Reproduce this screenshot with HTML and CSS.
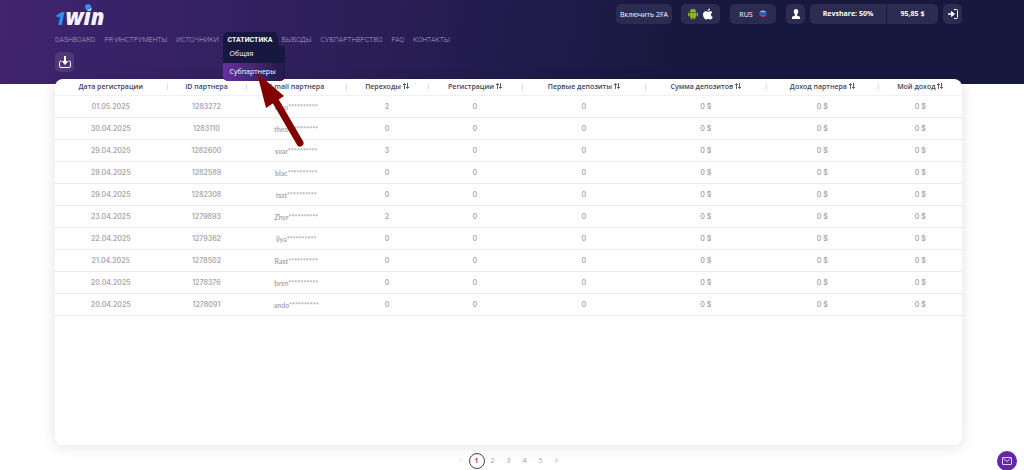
FILE: index.html
```html
<!DOCTYPE html>
<html lang="ru">
<head>
    <meta charset="UTF-8">
    <meta name="viewport" content="width=device-width, initial-scale=1.0">
    <title>1win</title>
    <link rel="stylesheet" href="styles.css">
</head>
<body>
    <header class="header">
        <div class="topbar">
            <a class="logo" href="#"><span class="logo-one">1</span><span class="logo-win">win</span></a>
            <div class="tools">
                <button class="tool tool-2fa">Включить 2FA</button>
                <div class="tool tool-apps">
                    <a href="#" aria-label="Android">
                        <svg width="10" height="12" viewBox="0 0 20 24" fill="#86b817">
                            <path d="M4 8a6 6 0 0 1 12 0z"/>
                            <path d="M6 1l2 3M14 1l-2 3" stroke="#86b817" stroke-width="1"/>
                            <path d="M4 9h12v9a1.500 1.500 0 0 1-1.500 1.500h-9A1.500 1.500 0 0 1 4 18z"/>
                            <rect x="0" y="9" width="3" height="8" rx="1.500"/>
                            <rect x="17" y="9" width="3" height="8" rx="1.500"/>
                            <rect x="6" y="17" width="3" height="6" rx="1.500"/>
                            <rect x="11" y="17" width="3" height="6" rx="1.500"/>
                        </svg>
                    </a>
                    <a href="#" aria-label="iOS">
                        <svg width="10" height="12" viewBox="0 0 20 24" fill="#fff">
                            <path d="M14 1c.2 3-2 5-4.500 5C9.300 3.500 11.500 1.300 14 1z"/>
                            <path d="M18.500 9c-4 2.500-3 7.500 1 9-1 2.500-2.700 5-4.700 5-1.700 0-2.300-1-4.300-1s-2.700 1-4.300 1C3 23 0 17 0 13c0-4 2.500-6.500 5.300-6.500 2 0 3.300 1.200 5 1.200 1.500 0 2.800-1.200 5-1.200 1.300 0 2.500.7 3.200 2.500z"/>
                        </svg>
                    </a>
                </div>
                <button class="tool tool-lang">RUS
                    <svg width="8" height="8" viewBox="0 0 16 16">
                        <path d="M1 5a8 8 0 0 1 14 0z" fill="#b9b9d6"/>
                        <path d="M1 5h14a8 8 0 0 1 0 6H1a8 8 0 0 1 0-6z" fill="#2b57c4"/>
                        <path d="M1 10h14a8 8 0 0 1-14 0z" fill="#d32f4a"/>
                    </svg>
                </button>
                <button class="tool tool-icon" aria-label="Профиль">
                    <svg width="8" height="10" viewBox="0 0 16 20" fill="#fff">
                        <path d="M8 0c3 0 4.500 2 4.500 5S11 10 10 11v2l5 2c1 .5 1 2 1 5H0c0-3 0-4.500 1-5l5-2v-2C5 10 3.500 8 3.500 5S5 0 8 0z"/>
                    </svg>
                </button>
                <div class="tool tool-balance">
                    <span class="revshare">Revshare: 50%</span>
                    <span class="amount">95,85 $</span>
                </div>
                <button class="tool tool-icon" aria-label="Выход">
                    <svg width="10" height="10" viewBox="0 0 20 20" fill="none" stroke="#fff" stroke-width="2">
                        <path d="M12 1h5a2 2 0 0 1 2 2v14a2 2 0 0 1-2 2h-5"/>
                        <path d="M0 10h8" stroke-width="3"/>
                        <path d="M7 5l6 5-6 5z" fill="#fff"/>
                    </svg>
                </button>
            </div>
        </div>
        <nav class="nav">
            <a href="#">DASHBOARD</a>
            <a href="#">PR-ИНСТРУМЕНТЫ</a>
            <a href="#">ИСТОЧНИКИ</a>
            <div class="nav-open">
                <a class="active" href="#">СТАТИСТИКА</a>
                <div class="submenu">
                    <a href="#">Общая</a>
                    <a class="selected" href="#">Субпартнеры</a>
                </div>
            </div>
            <a href="#">ВЫВОДЫ</a>
            <a href="#">СУБПАРТНЕРСТВО</a>
            <a href="#">FAQ</a>
            <a href="#">КОНТАКТЫ</a>
        </nav>
        <button class="download" aria-label="Скачать">
            <svg width="12" height="12" viewBox="0 0 24 24" fill="none" stroke="#fff" stroke-width="2">
                <path d="M5 10H4a3 3 0 0 0-3 3v7a3 3 0 0 0 3 3h16a3 3 0 0 0 3-3v-7a3 3 0 0 0-3-3h-1"/>
                <path d="M12 0v12" stroke-width="4"/>
                <path d="M7 11h10l-5 6z" fill="#fff"/>
            </svg>
        </button>
    </header>

    <main class="card">
        <table class="stats">
            <thead>
                <tr>
                    <th class="c-date">Дата регистрации</th>
                    <th class="c-id">ID партнера</th>
                    <th class="c-mail">E-mail партнера</th>
                    <th class="c-clicks">Переходы <span class="sort"></span></th>
                    <th class="c-regs">Регистрации <span class="sort"></span></th>
                    <th class="c-first">Первые депозиты <span class="sort"></span></th>
                    <th class="c-sum">Сумма депозитов <span class="sort"></span></th>
                    <th class="c-partner">Доход партнера <span class="sort"></span></th>
                    <th class="c-income">Мой доход <span class="sort"></span></th>
                </tr>
            </thead>
            <tbody id="rows"></tbody>
        </table>
    </main>

    <nav class="pages" aria-label="Страницы">
        <a class="disabled" href="#">&lt;</a>
        <a class="current" href="#">1</a>
        <a href="#">2</a>
        <a href="#">3</a>
        <a href="#">4</a>
        <a href="#">5</a>
        <a href="#">&gt;</a>
    </nav>

    <button class="mail" aria-label="Написать">
        <svg width="10" height="8" viewBox="0 0 20 16" fill="none" stroke="#e3d3f5" stroke-width="2">
            <rect x="1" y="1" width="18" height="14" rx="1"/>
            <path d="M3 3l7 6 7-6"/>
        </svg>
    </button>

    <svg class="pointer" width="50" height="76" viewBox="0 0 50 76">
        <path d="M19 27L44 70" stroke="#800000" stroke-width="7" stroke-linecap="round"/>
        <path d="M1 0L28 23L10 35z" fill="#800000"/>
    </svg>

    <script>
        const rows = [
            ['01.05.2025', '1283272', 'luku', 2],
            ['30.04.2025', '1283110', 'theo', 0],
            ['29.04.2025', '1282600', 'svar', 3],
            ['29.04.2025', '1282589', 'blac', 0],
            ['29.04.2025', '1282308', 'tsst', 0],
            ['23.04.2025', '1279893', 'Zhyr', 2],
            ['22.04.2025', '1279362', 'ilya', 0],
            ['21.04.2025', '1278502', 'Rast', 0],
            ['20.04.2025', '1278376', 'bren', 0],
            ['20.04.2025', '1278091', 'ando', 0]
        ];

        const arrows = '<svg width="6" height="6" viewBox="0 0 12 12" fill="none" stroke="#33334d" stroke-width="1.6"><path d="M3 12V2M0 4l3-3 3 3M9 0v10M6 8l3 3 3-3"/></svg>';
        document.querySelectorAll('.sort').forEach(el => {
            el.innerHTML = arrows;
        });

        document.getElementById('rows').innerHTML = rows.map(([date, id, mail, clicks]) => {
            const cells = [date, id, mail + '**********', clicks, 0, 0, '0 $', '0 $', '0 $'];
            return '<tr>' + cells.map(c => `<td>${c}</td>`).join('') + '</tr>';
        }).join('');
    </script>
</body>
</html>
```

FILE: styles.css
```css
* {
    box-sizing: border-box;
}
body {
    position: relative;
    display: flex;
    flex-direction: column;
    min-height: 100vh;
    margin: 0;
    padding: 0 62px 0 55px;
    background: linear-gradient(100deg, #40246e 0%, #2c1f5a 33%, #17183f 66%) no-repeat top / 100% 84px #fefefe;
    font-family: "Open Sans", sans-serif;
    font-size: 7px;
    overflow-x: hidden;
}
a {
    color: inherit;
    text-decoration: none;
}
button {
    border: 0;
    font: inherit;
    cursor: pointer;
}
svg {
    display: block;
}
.header {
    color: #fff;
}
.topbar {
    display: flex;
    justify-content: space-between;
    align-items: flex-start;
    height: 32px;
    padding-top: 4px;
}
.logo {
    position: relative;
    display: flex;
    align-items: baseline;
    font-weight: 800;
    font-style: italic;
    line-height: 24px;
}
.logo-one {
    color: #2f8fe8;
    font-size: 18px;
}
.logo-win {
    color: #f4f4ff;
    font-size: 22px;
}
.logo::after {
    content: "";
    position: absolute;
    top: 0;
    left: 30px;
    width: 6px;
    height: 6px;
    border-radius: 50%;
    background: #2f8fe8;
}
.tools {
    display: flex;
}
.tool {
    display: flex;
    justify-content: center;
    align-items: center;
    height: 20px;
    padding: 0;
    border-radius: 5px;
    background: #2c2b52;
    color: #fff;
}
.tool-2fa {
    width: 56px;
    margin-right: 9px;
}
.tool-apps {
    gap: 5px;
    width: 39px;
    margin-right: 10px;
}
.tool-lang {
    gap: 6px;
    width: 46px;
    margin-right: 10px;
}
.tool-icon {
    width: 19px;
}
.tool-balance {
    width: 128px;
    margin: 0 5px;
    font-weight: 700;
}
.tool-balance span {
    line-height: 20px;
    text-align: center;
}
.revshare {
    width: 77px;
    border-right: 1px solid #17183f;
}
.amount {
    flex: 1;
}
.nav {
    display: flex;
    gap: 9px;
    height: 20px;
    font-family: Roboto, sans-serif;
    font-weight: 300;
    line-height: 16px;
    color: #a99fc9;
}
.nav-open {
    position: relative;
    z-index: 2;
}
.active {
    display: block;
    margin: 0 -5px;
    padding: 0 5px;
    border-radius: 5px 5px 0 0;
    background: #17183f;
    font-weight: 700;
    color: #fff;
}
.submenu {
    position: absolute;
    top: 13px;
    left: -5px;
    width: 62px;
    overflow: hidden;
    border-radius: 0 5px 5px 5px;
    background: #17183f;
    font-family: "Open Sans", sans-serif;
    font-weight: 400;
    line-height: 18px;
    color: #fff;
}
.submenu a {
    display: block;
    padding-left: 7px;
}
.submenu .selected {
    background: linear-gradient(90deg, #67309f, #1f1a48);
}
.download {
    display: flex;
    justify-content: center;
    align-items: center;
    width: 19px;
    height: 20px;
    margin-bottom: 7px;
    padding: 0;
    border-radius: 5px;
    background: #4d3878;
}
.card {
    flex: 1;
    border-radius: 8px;
    background: #fff;
    box-shadow: 0 1px 14px rgba(0, 0, 0, 0.11);
}
.stats {
    width: 100%;
    table-layout: fixed;
    border-collapse: separate;
    border-spacing: 0;
    text-align: center;
    line-height: 14px;
}
.stats th {
    position: relative;
    height: 17px;
    padding: 0;
    border-bottom: 1px solid #f1f1f4;
    font-weight: 600;
    color: #44445c;
    white-space: nowrap;
}
.stats th + th::before {
    content: "";
    position: absolute;
    top: 5px;
    left: 0;
    height: 6px;
    border-left: 1px solid #dcdce2;
}
.stats td {
    height: 22px;
    padding: 0;
    border-bottom: 1px solid #ececef;
    font-family: Inter, sans-serif;
    font-weight: 600;
    color: #a9a9b0;
}
.stats td:nth-child(3) {
    font-family: Lato, sans-serif;
    font-weight: 700;
}
.sort {
    display: inline-block;
}
.c-date {
    width: 12.3%;
}
.c-id {
    width: 8.8%;
}
.c-mail {
    width: 11%;
}
.c-clicks {
    width: 9%;
}
.c-regs {
    width: 10.4%;
}
.c-first {
    width: 13.6%;
}
.c-sum {
    width: 13.3%;
}
.c-partner {
    width: 12.4%;
}
.c-income {
    width: 9.2%;
}
.pages {
    display: flex;
    justify-content: center;
    align-items: center;
    height: 25px;
    padding-top: 7px;
    color: #a0a0a8;
}
.pages a {
    width: 16px;
    line-height: 14px;
    text-align: center;
}
.pages .disabled {
    color: #dcdce0;
}
.pages .current {
    height: 16px;
    border: 1px solid #44445c;
    border-radius: 50%;
    font-weight: 600;
    color: #33334d;
}
.mail {
    position: fixed;
    right: 7px;
    bottom: -1px;
    display: flex;
    justify-content: center;
    align-items: center;
    width: 20px;
    height: 20px;
    padding: 0;
    border-radius: 50%;
    background: #6427a8;
}
.pointer {
    position: absolute;
    top: 73px;
    left: 256px;
    z-index: 3;
    pointer-events: none;
}
```
